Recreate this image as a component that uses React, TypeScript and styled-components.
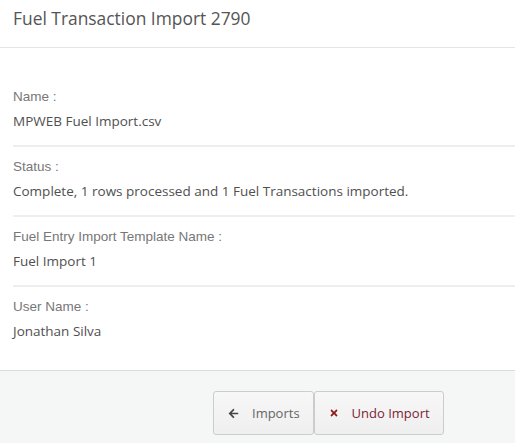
import React from 'react'
import styled, { createGlobalStyle } from 'styled-components'
import { FaArrowLeft, FaTimes } from 'react-icons/fa'

const GlobalStyle = createGlobalStyle`
  html, body {
    margin: 0;
    padding: 0;
    background: #fff;
  }
  body {
    font-family: 'Open Sans', sans-serif;
  }
`

const Modal = styled.div`
  width: 515px;
  height: 443px;
  display: flex;
  flex-direction: column;
  background: #fff;
  overflow: hidden;
`

const Header = styled.div`
  height: 48px;
  box-sizing: border-box;
  padding: 6px 13px 0;
  border-bottom: 1px solid #e5e5e5;
`

const Title = styled.h4`
  margin: 0;
  font-family: 'Open Sans', sans-serif;
  font-weight: 400;
  font-size: 17.4px;
  line-height: 24px;
  color: #555;
`

const Body = styled.div`
  flex: 1;
  padding: 29px 0 0 13px;
`

const Field = styled.div<{ $last?: boolean }>`
  padding: 10px 0 14px;
  border-bottom: ${(p) => (p.$last ? 'none' : '2px solid #eee')};
  display: flex;
  flex-direction: column;
  gap: 4px;
`

const Label = styled.div`
  font-family: 'Liberation Sans', Arial, sans-serif;
  font-size: 13.5px;
  line-height: 20px;
  color: #777;
`

const Value = styled.div`
  font-family: 'Open Sans', sans-serif;
  font-size: 13.5px;
  line-height: 20px;
  color: #505050;
`

const Footer = styled.div`
  height: 73px;
  box-sizing: border-box;
  border-top: 1px solid #ddd;
  background: #f5f7f6;
  padding: 20px 0 0 213px;
  display: flex;
  align-items: flex-start;
`

const Button = styled.button<{ $danger?: boolean }>`
  height: 44px;
  box-sizing: border-box;
  display: inline-flex;
  align-items: center;
  gap: 13px;
  padding: 0 13px 0 14px;
  background: linear-gradient(#f7f7f7, #efefef);
  border: 1px solid #ccc;
  border-radius: 3px;
  font-family: 'Open Sans', sans-serif;
  font-size: 13px;
  color: ${(p) => (p.$danger ? '#7b1f34' : '#666')};
  cursor: pointer;

  svg {
    width: ${(p) => (p.$danger ? '10px' : '11px')};
    height: ${(p) => (p.$danger ? '10px' : '11px')};
    color: ${(p) => (p.$danger ? '#8e1a1a' : '#444')};
  }
`

const fields = [
  { label: 'Name :', value: 'MPWEB Fuel Import.csv' },
  { label: 'Status :', value: 'Complete, 1 rows processed and 1 Fuel Transactions imported.' },
  { label: 'Fuel Entry Import Template Name :', value: 'Fuel Import 1' },
  { label: 'User Name :', value: 'Jonathan Silva' },
]

export default function App() {
  return (
    <>
      <GlobalStyle />
      <Modal>
        <Header>
          <Title>Fuel Transaction Import 2790</Title>
        </Header>
        <Body>
          {fields.map((f, i) => (
            <Field key={f.label} $last={i === fields.length - 1}>
              <Label>{f.label}</Label>
              <Value>{f.value}</Value>
            </Field>
          ))}
        </Body>
        <Footer>
          <Button>
            <FaArrowLeft />
            Imports
          </Button>
          <Button $danger>
            <FaTimes />
            Undo Import
          </Button>
        </Footer>
      </Modal>
    </>
  )
}
